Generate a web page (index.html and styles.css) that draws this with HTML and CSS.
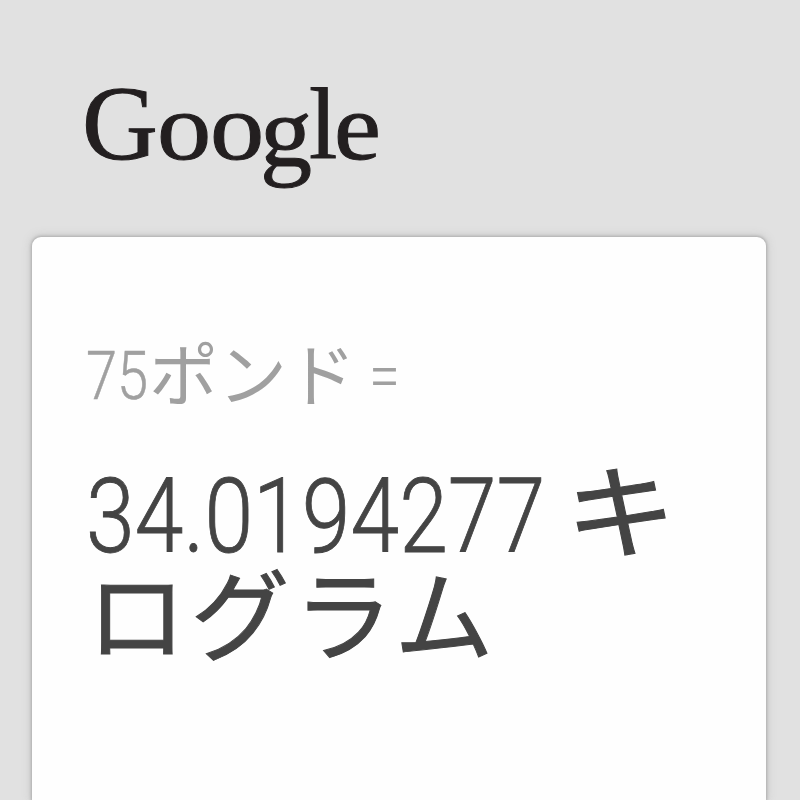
FILE: index.html
```
<!DOCTYPE html>
<html lang="ja">
<head>
<meta charset="utf-8">
<title>Google</title>
<link rel="stylesheet" href="styles.css">
</head>
<body>
<header class="header">
<svg class="logo" viewBox="80 70 310 120" role="img" aria-label="Google">
<text class="logo-text" x="82" y="159" font-size="105">G</text>
<text class="logo-text" transform="translate(157 158.5) scale(1.13 1)" font-size="96">o</text>
<text class="logo-text" transform="translate(210 158.5) scale(1.13 1)" font-size="96">o</text>
<text class="logo-text" transform="translate(260 166) scale(1.03 1)" font-size="101">g</text>
<text class="logo-text" x="309" y="158" font-size="102">l</text>
<text class="logo-text" transform="translate(334 158.5) scale(1.1 1)" font-size="96">e</text>
</svg>
</header>
<main class="card">
<div class="query"><span class="num"><span>75</span></span><span class="kana">ポンド</span><span class="equals"><span>=</span></span></div>
<div class="answer">
<div class="row"><span class="num"><span>34.0194277</span></span><span class="kana wide">キ</span></div>
<div class="row second"><span class="kana">ログラム</span></div>
</div>
</main>
</body>
</html>
```
FILE: styles.css
```
* { box-sizing: border-box; }
body {
  margin: 0;
  height: 800px;
  overflow: hidden;
  background: #e1e1e1;
  font-family: Roboto, "Noto Sans CJK JP", sans-serif;
}
.header { height: 237px; padding: 70px 0 0 80px; }
.logo { display: block; width: 310px; height: 120px; overflow: visible; }
.logo-text {
  font-family: "Liberation Serif", serif;
  fill: #231f20;
  stroke: #231f20;
  stroke-width: 1px;
}
.card {
  width: 734px;
  height: 563px;
  margin: 0 0 0 32px;
  padding: 98px 0 0 54px;
  background: #fefefe;
  border-radius: 9px 9px 0 0;
  box-shadow: 0 0 3px 1px #adadad, 0 0 8px 2px #cbcbcb;
}
.query, .row { display: flex; white-space: nowrap; }
.num > span, .equals > span {
  display: inline-block;
  transform: scaleX(.836);
  transform-origin: 0 0;
}
.num, .equals { font-weight: 300; }
.kana { font-family: "Noto Sans CJK JP", sans-serif; font-weight: 400; }
.query { height: 80px; color: #a0a0a0; font-size: 67px; line-height: 80px; }
.query .num { width: 63px; padding-top: 1px; -webkit-text-stroke: .5px #a0a0a0; }
.query .equals { padding-top: 1px; }
.query .kana { width: 220px; margin-top: -4px; font-size: 69px; }
.answer { padding-top: 48px; color: #444; font-size: 104px; line-height: 108px; }
.answer .num > span { transform: scaleX(.844); }
.row { height: 108px; }
.answer .num { width: 480px; -webkit-text-stroke: .9px #444; }
.answer .kana { font-size: 103px; -webkit-text-stroke: 1px #444; }
.row .wide { margin-top: -10px; transform: scaleX(1.08); transform-origin: 10% 0; }
.second .kana { margin: -15px 0 0 1px; font-size: 99px; letter-spacing: 4.5px; }
```
